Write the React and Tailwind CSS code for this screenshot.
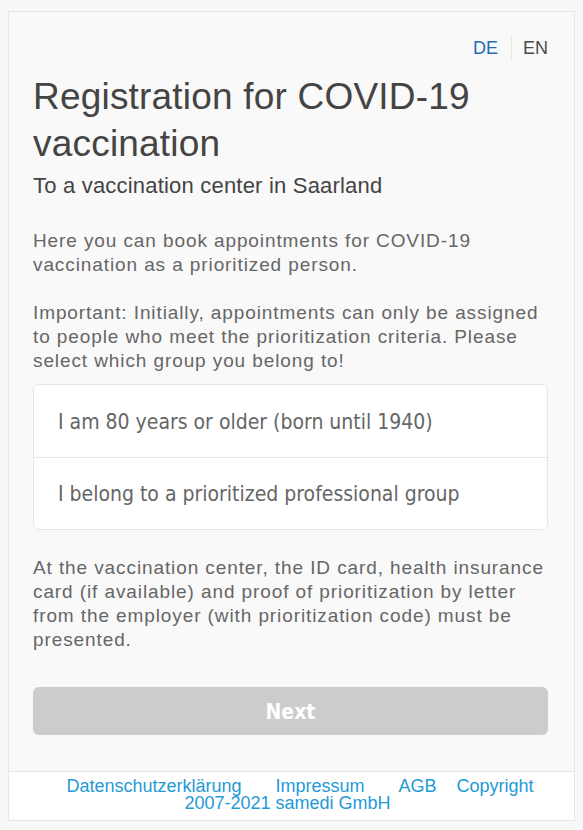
import React from 'react';

const sans = { fontFamily: '"Liberation Sans", Arial, sans-serif' };
const tahoma = { fontFamily: '"DejaVu Sans Condensed", "DejaVu Sans", sans-serif' };

const App = () => {
  const groups = [
    'I am 80 years or older (born until 1940)',
    'I belong to a prioritized professional group',
  ];

  return (
    <div className="min-h-[830px] bg-[#f8f8f8] pt-[11px]" style={sans}>
      <div className="ml-[8px] w-[567px] border border-[#e6e6e6] bg-[#f9f9f9]">
        <div className="pl-6 pr-[26px] pt-6 pb-9">
          <div className="flex justify-end text-[18px] leading-6">
            <span className="pr-[13px] text-[#1f6db3]">DE</span>
            <span className="border-l border-[#e6e6e6] pl-[11px] text-[#4a4a4a]">EN</span>
          </div>

          <h1 className="mt-[13px] text-[37px] leading-[47px] tracking-[0.2px] text-[#444]">
            Registration for COVID-19 vaccination
          </h1>
          <h2 className="mt-[7px] text-[22px] leading-6 tracking-[0.2px] text-[#444]">
            To a vaccination center in Saarland
          </h2>

          <p className="mt-[31px] text-[19px] leading-6 tracking-[0.9px] text-[#666]">
            Here you can book appointments for COVID-19 vaccination as a prioritized person.
          </p>
          <p className="mt-6 text-[19px] leading-6 tracking-[0.9px] text-[#666]">
            Important: Initially, appointments can only be assigned to people who meet the
            prioritization criteria. Please select which group you belong to!
          </p>

          <div className="mt-[11px] rounded-md border border-[#e6e6e6] bg-white">
            {groups.map((g, i) => (
              <div
                key={g}
                className={`flex h-[72px] items-center px-6 pt-[3px] text-[21px] text-[#666] ${i > 0 ? 'border-t border-[#e6e6e6]' : ''}`}
                style={tahoma}
              >
                {g}
              </div>
            ))}
          </div>

          <p className="mt-[26px] text-[19px] leading-6 tracking-[0.9px] text-[#666]">
            At the vaccination center, the ID card, health insurance card (if available) and proof
            of prioritization by letter from the employer (with prioritization code) must be
            presented.
          </p>

          <button
            type="button"
            disabled
            className="mt-[35px] h-12 w-full rounded-md bg-[#cccccc] pt-[4px] text-[21px] font-bold text-white"
            style={tahoma}
          >
            Next
          </button>
        </div>

        <div className="border-t border-[#e6e6e6] bg-white pt-[6px] pb-[8px] text-center text-[18px] leading-[17px] text-[#1f9ad6]">
          <a className="mx-[17px]">Datenschutzerklärung</a>
          <a className="mx-[17px]">Impressum</a>
          <a className="ml-[17px] mr-[20px]">AGB</a>
          <a className="mr-[8px]">
            Copyright <span className="whitespace-nowrap">2007-2021</span> samedi GmbH
          </a>
        </div>
      </div>
    </div>
  );
};

export default App;
